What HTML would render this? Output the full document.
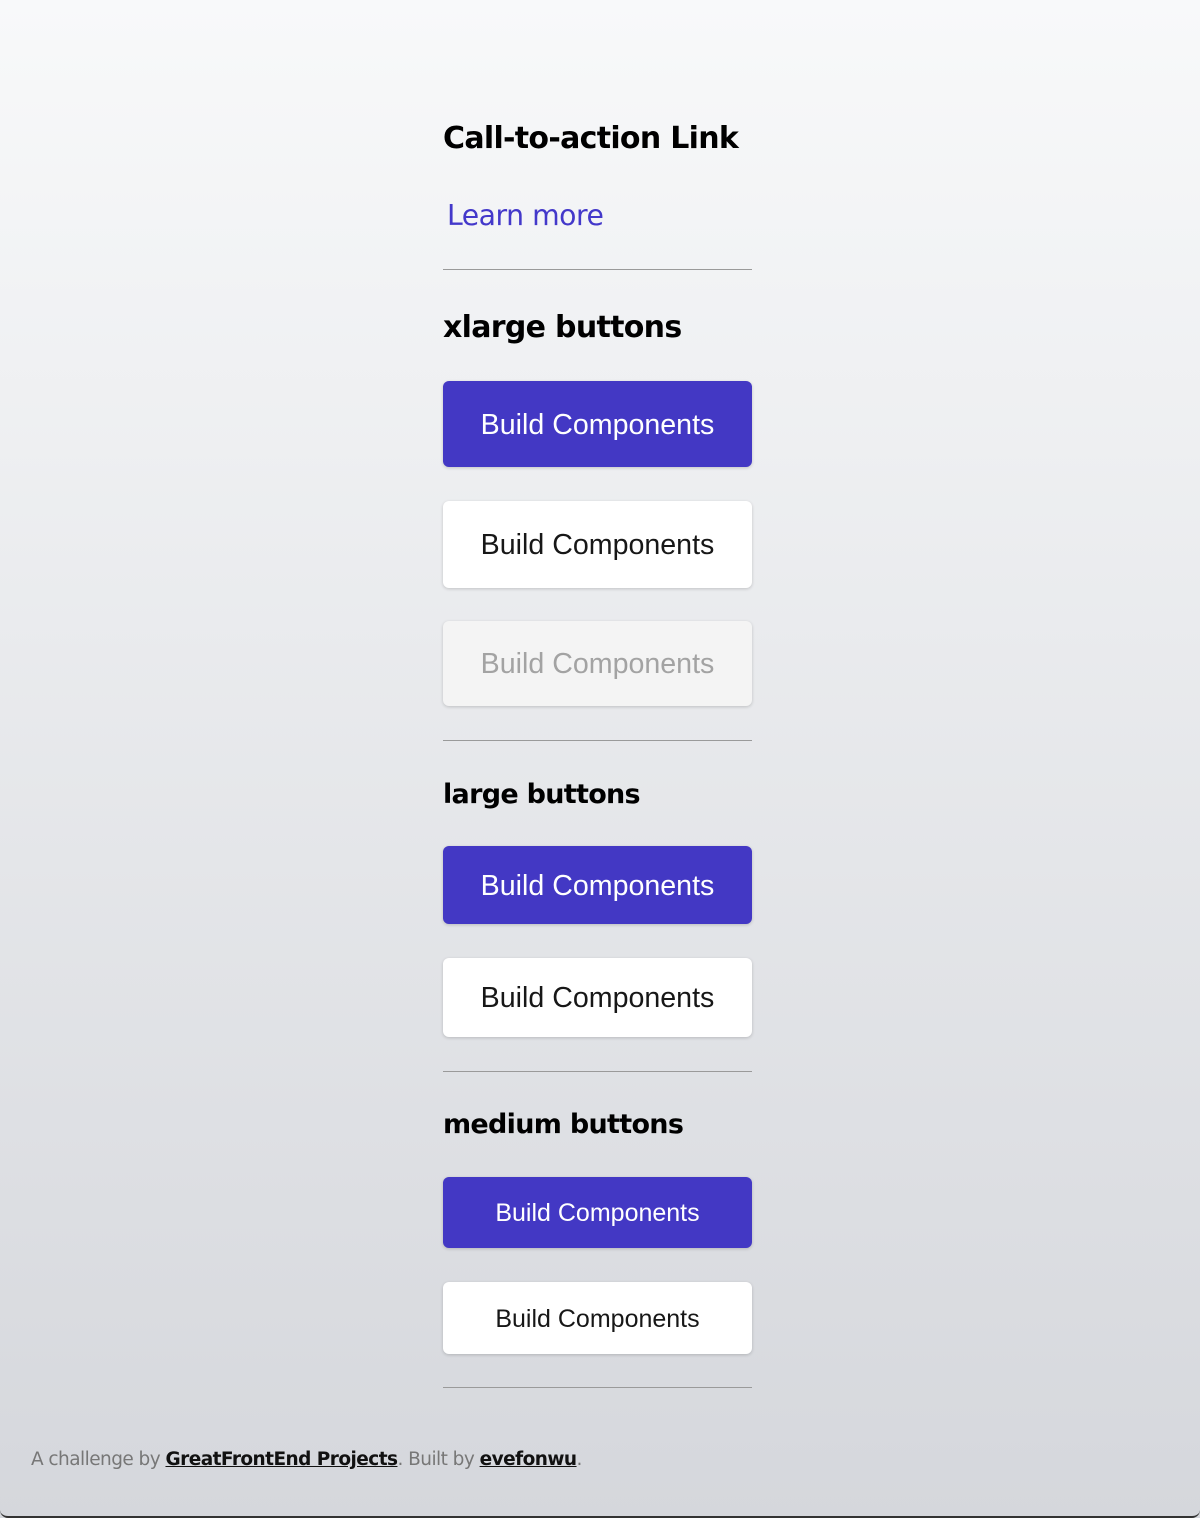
<!DOCTYPE html>
<html><head><meta charset="utf-8"><style>
*{margin:0;padding:0;box-sizing:border-box}
html,body{width:1200px;height:1518px;overflow:hidden}
body{background:linear-gradient(#f8f9fa,#d5d7dc);font-family:"Liberation Sans",sans-serif;position:relative;border-bottom:2px solid #333;border-radius:0 0 8px 8px}
.a{position:absolute;white-space:nowrap}
h2{position:absolute;left:443px;font-weight:bold;color:#000;font-family:"DejaVu Sans","Liberation Sans",sans-serif;letter-spacing:-0.7px}
.hr{position:absolute;left:443px;width:309px;height:1px;background:#9a9a9a}
.b{position:absolute;left:443px;width:309px;border-radius:6px;display:flex;align-items:center;justify-content:center;font-size:28.6px;padding-top:2px;box-shadow:0 1px 3px rgba(0,0,0,.18)}
.p{background:#4338c4;color:#fff}
.s{background:#fff;color:#171717}
.d{background:#f4f4f4;color:#a3a3a3}
.m{font-size:25px}
</style></head><body>
<h2 style="top:121px;font-size:30px">Call-to-action Link</h2>
<div class="a" style="left:447px;top:199px;font-size:28.3px;color:#4338ca;font-family:'DejaVu Sans','Liberation Sans',sans-serif;letter-spacing:-0.5px">Learn more</div>
<div class="hr" style="top:269px"></div>
<h2 style="top:310px;font-size:30px">xlarge buttons</h2>
<div class="b p" style="top:381px;height:86px">Build Components</div>
<div class="b s" style="top:501px;height:87px">Build Components</div>
<div class="b d" style="top:621px;height:85px">Build Components</div>
<div class="hr" style="top:740px"></div>
<h2 style="top:779px;font-size:27px">large buttons</h2>
<div class="b p" style="top:846px;height:78px">Build Components</div>
<div class="b s" style="top:958px;height:79px">Build Components</div>
<div class="hr" style="top:1071px"></div>
<h2 style="top:1109px;font-size:27px">medium buttons</h2>
<div class="b p m" style="top:1177px;height:71px">Build Components</div>
<div class="b s m" style="top:1282px;height:72px">Build Components</div>
<div class="hr" style="top:1387px"></div>
<div class="a" style="left:31px;top:1449px;font-size:18.5px;color:#777;font-family:'DejaVu Sans','Liberation Sans',sans-serif;letter-spacing:-0.55px">A challenge by <u style="color:#111;font-weight:bold">GreatFrontEnd Projects</u>. Built by <u style="color:#111;font-weight:bold">evefonwu</u>.</div>
</body></html>
